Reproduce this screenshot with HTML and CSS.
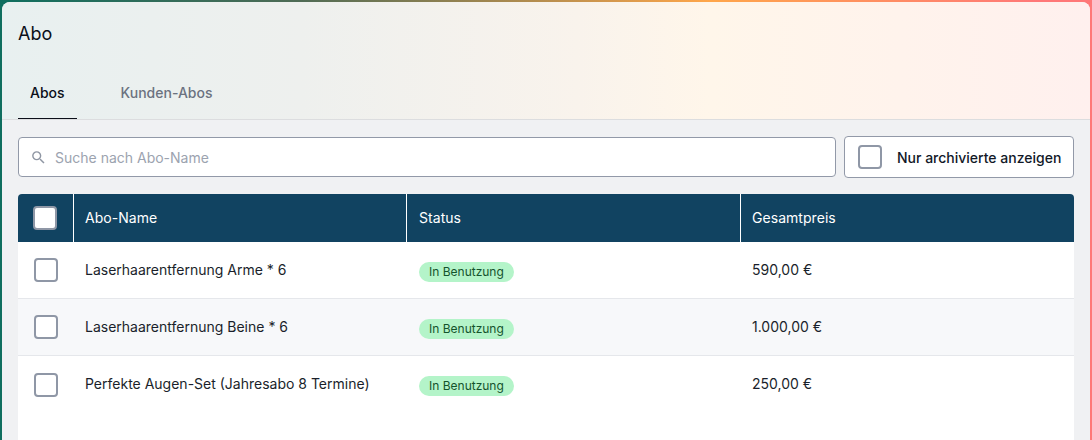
FILE: index.html
```html
<!DOCTYPE html>
<html lang="de">
<head>
<meta charset="utf-8">
<title>Abo</title>
<link rel="stylesheet" href="styles.css">
</head>
<body>
<div class="frame">
  <main class="panel">
    <header class="head">
      <h1 class="title">Abo</h1>
      <nav class="tabs">
        <a class="tab tab-active">Abos</a>
        <a class="tab">Kunden-Abos</a>
      </nav>
    </header>
    <section class="content">
      <div class="filters">
        <label class="search">
          <svg class="search-icon" width="17" height="17" viewBox="0 0 24 24"><path d="M15.5 14h-.79l-.28-.27A6.47 6.47 0 0 0 16 9.5 6.5 6.5 0 1 0 9.5 16c1.61 0 3.09-.59 4.23-1.57l.27.28v.79l5 4.99L20.49 19l-4.99-5zm-6 0C7.01 14 5 11.99 5 9.5S7.01 5 9.5 5 14 7.01 14 9.5 11.99 14 9.5 14z"/></svg>
          <span class="placeholder">Suche nach Abo-Name</span>
        </label>
        <div class="archive">
          <span class="check"></span>
          <span class="archive-label">Nur archivierte anzeigen</span>
        </div>
      </div>
      <div class="table">
        <div class="row row-head">
          <div class="cell cell-check"><span class="check check-filled"></span></div>
          <div class="cell">Abo-Name</div>
          <div class="cell cell-status">Status</div>
          <div class="cell cell-last">Gesamtpreis</div>
        </div>
        <div class="row">
          <div class="cell cell-check"><span class="check"></span></div>
          <div class="cell">Laserhaarentfernung Arme * 6</div>
          <div class="cell"><span class="badge">In Benutzung</span></div>
          <div class="cell">590,00 €</div>
        </div>
        <div class="row row-alt">
          <div class="cell cell-check"><span class="check"></span></div>
          <div class="cell">Laserhaarentfernung Beine * 6</div>
          <div class="cell"><span class="badge">In Benutzung</span></div>
          <div class="cell">1.000,00 €</div>
        </div>
        <div class="row row-end">
          <div class="cell cell-check"><span class="check"></span></div>
          <div class="cell">Perfekte Augen-Set (Jahresabo 8 Termine)</div>
          <div class="cell"><span class="badge">In Benutzung</span></div>
          <div class="cell">250,00 €</div>
        </div>
      </div>
    </section>
  </main>
</div>
</body>
</html>
```
FILE: styles.css
```css
* { box-sizing: border-box; }
html, body { margin: 0; height: 100%; overflow: hidden; }
body { font-family: Inter, "Liberation Sans", sans-serif; color: #111827; }
.frame {
  height: 440px;
  padding: 2px 2px 0;
  background: linear-gradient(90deg, #0f6e5f 0%, #4f6b55 27.5%, #ffa64a 65%, #ff7878 95%, #ff7878 100%);
}
.panel {
  height: 438px;
  background: #f0f1f3;
  border-radius: 8px 8px 0 0;
  overflow: hidden;
}
.head {
  height: 118px;
  padding: 0 16px;
  background: linear-gradient(90deg, #e8f0f0 0%, #eef0ee 27.5%, #f9f3ec 53%, #fff6ea 65%, #fff0ee 100%);
  border-bottom: 1px solid #dcdddf;
  display: flex;
  flex-direction: column;
}
.title {
  margin: 0;
  padding-top: 20px;
  height: 64px;
  font-size: 18px;
  line-height: 24px;
  font-weight: 430;
  color: #0b0f19;
}
.tabs { display: flex; gap: 32px; height: 53px; }
.tab {
  padding: 0 12px;
  height: 53px;
  line-height: 53px;
  font-size: 14px;
  font-weight: 450;
  color: #6b7280;
}
.tab-active { color: #0b0f19; border-bottom: 1px solid #0b0f19; }
.content { padding: 16px 16px 0; }
.filters { display: flex; gap: 8px; align-items: center; height: 42px; }
.search {
  flex: 1;
  height: 40px;
  background: #fff;
  border: 1px solid #9299a8;
  border-radius: 4px;
  display: flex;
  align-items: center;
  padding-left: 11px;
  gap: 8px;
}
.search-icon { fill: #8f96a3; flex: none; }
.placeholder { font-size: 14px; color: #9ca3af; }
.archive {
  width: 230px;
  height: 42px;
  background: #fff;
  border: 1px solid #9299a8;
  border-radius: 4px;
  display: flex;
  align-items: center;
  padding-left: 13px;
}
.archive-label { margin-left: 15px; font-size: 14px; font-weight: 450; color: #111827; }
.check {
  display: block;
  flex: none;
  width: 24px;
  height: 24px;
  background: #fff;
  border: 2px solid #8f97a6;
  border-radius: 4px;
}
.table {
  margin-top: 16px;
  background: #fff;
  border-radius: 4px 4px 0 0;
  height: 250px;
  overflow: hidden;
}
.row {
  display: grid;
  grid-template-columns: 56px 333px 334px 1fr;
  height: 57px;
  border-bottom: 1px solid #e5e7eb;
  font-size: 14px;
  color: #1a1f2b;
}
.row-head {
  height: 48px;
  background: #114361;
  color: #fff;
  border-bottom: 0;
  font-weight: 430;
  letter-spacing: .05px;
}
.row-alt { background: #f7f8fa; }
.row-end { border-bottom: 0; }
.cell { display: flex; align-items: center; padding: 0 0 2px 11px; }
.row-head .cell { border-right: 1px solid #fff; }
.row-head .cell-last { border-right: 0; }
.row-head .cell-status { padding-left: 12px; }
.cell-check { padding: 0 0 0 16px; }
.row-head .cell-check { padding-left: 15px; }
.badge {
  display: block;
  height: 20px;
  line-height: 20px;
  padding: 0 10px;
  margin-left: 1px;
  border-radius: 10px;
  background: #b4f4c9;
  color: #14532d;
  font-size: 12px;
  font-weight: 400;
  margin-top: 5px;
}
```
